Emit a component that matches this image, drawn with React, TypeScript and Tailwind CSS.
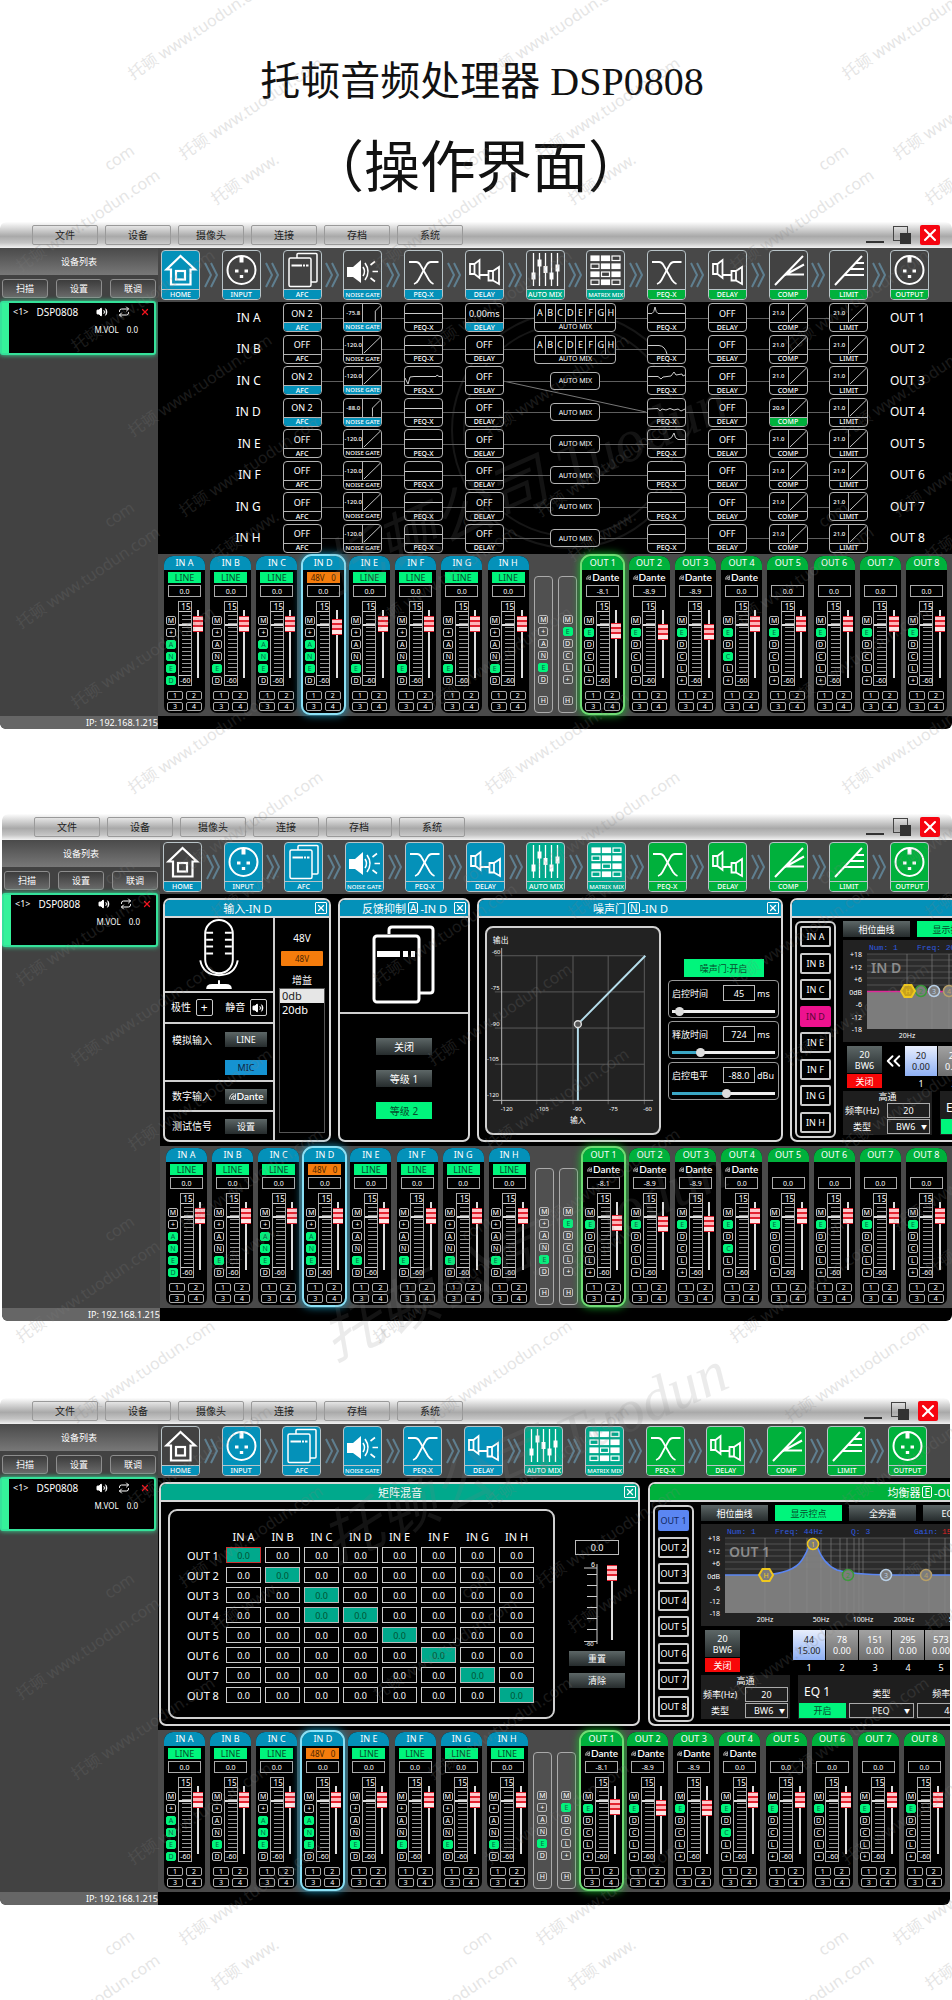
import { Fragment, type ReactNode } from 'react'
import clsx from 'clsx'
import { ChevronsLeft, Repeat, Volume2, X } from 'lucide-react'

type Tone = 'blue' | 'teal' | 'green'

const toneBg: Record<Tone, string> = {
    blue: 'bg-[#0491b9]',
    teal: 'bg-[#00a98c]',
    green: 'bg-[#00b13c]',
}

/* ---------- toolbar icons ---------- */

const HomeIcon = () => (
    <g strokeWidth="2.2">
        <path d="M18.500 5 4.500 18.500H9V33.500H28.500V18.500H33Z" />
        <rect x="14" y="20" width="9" height="8.500" />
    </g>
)

const XlrIcon = () => (
    <g>
        <circle cx="18.500" cy="19" r="14" strokeWidth="2" />
        <path d="M16.500 5h4v6.500h-4zM12 18.500h3.500v3H12zM21.500 18.500H25v3h-3.500zM16.800 24h3.400v3h-3.400z" fill="white" stroke="none" />
    </g>
)

const AfcIcon = () => (
    <g strokeWidth="1.500">
        <path d="M13 7V3.500Q13 2.500 14 2.500H32Q33 2.500 33 3.500V30Q33 31 32 31H27" />
        <rect x="5" y="7" width="22" height="28.500" rx="1.500" />
        <path d="M7.500 14.500H18M19 14.500H21M22 14.500H24.500" strokeWidth="2.200" />
    </g>
)

const GateIcon = () => (
    <g>
        <path d="M3 16H9L17 9V32L9 26H3Z" fill="white" stroke="none" />
        <path d="M19 16Q22 20.500 19 25M21 12Q27 20.500 21 29" strokeWidth="1.600" />
        <path d="M26.500 14 31 10.500M28.500 20.500H34M26.500 27 31 30.500" strokeWidth="1.600" />
    </g>
)

const PeqIcon = () => (
    <g strokeWidth="1.800">
        <path d="M4 11H11Q14 11 16 15L24 29Q26 32 28.500 33" />
        <path d="M33.500 11H26Q23 11 21 15L13.500 29Q12 32 9 33" />
    </g>
)

const DelayIcon = () => (
    <g strokeWidth="1.800">
        <path d="M4 13H8.500V23H4ZM8.500 13 13.500 9V27L8.500 23M13.500 24H22.500" />
        <path d="M22.500 20H27V29.500H22.500ZM27 20 33 16V33L27 29.500" />
    </g>
)

const AutoMixIcon = () => (
    <g strokeWidth="1.300">
        <path d="M6.500 2V35M12.500 2V35M18.500 2V35M24.500 2V35M30.500 2V35" />
        <path
            d="M4.500 21.500h4v7h-4zM10.500 8.500h4v7h-4zM16.500 15h4v7h-4zM22.500 21.500h4v7h-4zM28.500 13.500h4v7h-4z"
            fill="white"
            stroke="none"
        />
    </g>
)

const matrixDots = ['110', '011', '101', '010']

const MatrixIcon = () => (
    <g strokeWidth="1.200">
        {matrixDots.map((row, y) =>
            row.split('').map((on, x) => (
                <rect key={`${x}${y}`} x={4 + x * 10.500} y={5 + y * 8} width="8" height="4.500" fill={on === '1' ? 'white' : 'none'} />
            )),
        )}
    </g>
)

const CompIcon = () => (
    <g strokeWidth="2">
        <path d="M5 34 33 5M15 24 34 13.500M15 23.500H34" />
    </g>
)

const LimitIcon = () => (
    <g strokeWidth="2">
        <path d="M5 34 32 5M26 12H34M20.500 18H34M15 24H34" />
    </g>
)

const modules: { label: string; tone: Tone; icon: ReactNode }[] = [
    { label: 'HOME', tone: 'blue', icon: <HomeIcon /> },
    { label: 'INPUT', tone: 'blue', icon: <XlrIcon /> },
    { label: 'AFC', tone: 'blue', icon: <AfcIcon /> },
    { label: 'NOISE GATE', tone: 'blue', icon: <GateIcon /> },
    { label: 'PEQ-X', tone: 'blue', icon: <PeqIcon /> },
    { label: 'DELAY', tone: 'blue', icon: <DelayIcon /> },
    { label: 'AUTO MIX', tone: 'teal', icon: <AutoMixIcon /> },
    { label: 'MATRIX MIX', tone: 'teal', icon: <MatrixIcon /> },
    { label: 'PEQ-X', tone: 'green', icon: <PeqIcon /> },
    { label: 'DELAY', tone: 'green', icon: <DelayIcon /> },
    { label: 'COMP', tone: 'green', icon: <CompIcon /> },
    { label: 'LIMIT', tone: 'green', icon: <LimitIcon /> },
    { label: 'OUTPUT', tone: 'green', icon: <XlrIcon /> },
]

// long captions only fit the 37px tile one size down
const captionSize = (label: string) => (label.length > 8 ? 'text-[6px]' : 'text-[7px]')

function Toolbar({ home }: { home: boolean }) {
    return (
        <nav className="flex h-[54px] items-center bg-[#484848] pr-[23px] pl-[3px]">
            {modules.map((m, i) => {
                const filled = home ? i === 0 : i > 0
                return (
                    <Fragment key={i}>
                        {i > 0 && (
                            <span className="flex flex-1 justify-center">
                                <svg viewBox="0 0 16 28" className="h-7 w-4" fill="none" stroke="#5f7f90" strokeWidth="2">
                                    <path d="M2 2 8 14 2 26M8 2 14 14 8 26" />
                                </svg>
                            </span>
                        )}
                        <button
                            type="button"
                            className={clsx(
                                'flex h-[50px] w-[39px] shrink-0 flex-col overflow-hidden rounded-[4px] border border-[#b9c4c8]',
                                filled ? toneBg[m.tone] : 'bg-[#424242]',
                            )}
                        >
                            <svg viewBox="0 0 37 38" className="h-[38px] w-full" fill="none" stroke="white">
                                {m.icon}
                            </svg>
                            <span
                                className={clsx(
                                    'flex h-[10px] w-full items-center justify-center border-t border-[#b9c4c8] leading-[8px] font-medium whitespace-nowrap',
                                    captionSize(m.label),
                                    toneBg[m.tone],
                                )}
                            >
                                {m.label}
                            </span>
                        </button>
                    </Fragment>
                )
            })}
        </nav>
    )
}

/* ---------- title bar and device list ---------- */

const menus = ['文件', '设备', '摄像头', '连接', '存档', '系统']

function TitleBar() {
    return (
        <header className="flex h-[26px] items-center rounded-t-md bg-[linear-gradient(#fdfdfd,#a9a9a9_55%,#c4c4c4_80%,#f2f2f2)] pr-3 pl-8">
            <div className="flex gap-[7px]">
                {menus.map((menu) => (
                    <button key={menu} type="button" className="h-[20px] w-[66px] rounded-[2px] border border-[#9a9a9a] text-[10px] leading-none text-[#222]">
                        {menu}
                    </button>
                ))}
            </div>
            <div className="ml-auto flex items-center gap-[9px]">
                <button type="button" aria-label="最小化" className="flex h-5 w-[18px] items-end">
                    <span className="mb-[2px] h-[2px] w-full bg-[#333]" />
                </button>
                <button type="button" aria-label="还原">
                    <svg viewBox="0 0 18 18" className="h-[18px] w-[18px]">
                        <rect x="0.500" y="0.500" width="14" height="14" fill="none" stroke="#444" />
                        <rect x="7" y="7" width="11" height="11" fill="#333" />
                    </svg>
                </button>
                <button type="button" aria-label="关闭窗口" className="flex h-5 w-5 items-center justify-center rounded-[2px] bg-[#f60410]">
                    <X className="h-5 w-5 text-white" strokeWidth={2.5} />
                </button>
            </div>
        </header>
    )
}

function Sidebar() {
    return (
        <aside className="flex w-[158px] shrink-0 flex-col bg-[#424242]">
            <h2 className="flex h-[27px] items-center justify-center bg-linear-to-b from-[#4a4a4a] to-[#787878] text-[9px] leading-none">设备列表</h2>
            <div className="flex h-[26px] items-center justify-between px-[2px]">
                {['扫描', '设置', '联调'].map((label) => (
                    <button
                        key={label}
                        type="button"
                        className="h-[19px] w-[46px] rounded-[3px] border border-[#8d8d8d] bg-linear-to-b from-[#3c3c3c] to-[#6a6a6a] text-[9px] leading-none"
                    >
                        {label}
                    </button>
                ))}
            </div>
            <section className="mr-[2px] flex h-[54px] rounded-[3px] border-2 border-[#35e29a] bg-black shadow-[0_0_5px_#35e29a]">
                <div className="w-[7px] bg-[#35f29a]" />
                <div className="flex-1 pt-[3px]">
                    <div className="flex items-center pr-1 pl-1">
                        <span className="text-[9px] leading-3">&lt;1&gt;</span>
                        <span className="ml-2 text-[10px] leading-3">DSP0808</span>
                        <Volume2 className="ml-auto h-3 w-3" fill="white" />
                        <Repeat className="ml-[10px] h-3 w-3" />
                        <X className="ml-[10px] h-[10px] w-[10px] text-[#f0141e]" strokeWidth={3} />
                    </div>
                    <p className="mt-[6px] flex justify-end gap-2 pr-[16px] text-[8px] leading-3">
                        <span>M.VOL</span>
                        <span>0.0</span>
                    </p>
                </div>
            </section>
            <p className="mt-auto h-[13px] rounded-bl-md bg-[#666] text-right text-[9px] leading-[13px]">IP: 192.168.1.215</p>
        </aside>
    )
}

/* ---------- mixer ---------- */

function Dante() {
    return (
        <span className="flex items-center justify-center gap-px font-['Lato',sans-serif] text-[10px] leading-[11px] font-semibold text-white">
            <svg viewBox="0 0 12 12" className="h-[7px] w-[7px]" fill="none" stroke="white" strokeWidth="1.500">
                <path d="M1 11Q1 3 8 1M4 11Q4 6 9 4M11 1V11H7V8Q7 6 11 5" />
            </svg>
            Dante
        </span>
    )
}

const verticalFader =
    'block w-[10px] appearance-none bg-[linear-gradient(90deg,transparent_4px,#ddd_4px,#ddd_6px,transparent_6px)] [direction:rtl] [writing-mode:vertical-lr] [&::-webkit-slider-thumb]:h-[16px] [&::-webkit-slider-thumb]:w-[10px] [&::-webkit-slider-thumb]:appearance-none [&::-webkit-slider-thumb]:bg-[linear-gradient(#e2222f_1px,#ffc9cc_1px,#ffc9cc_4px,#e2222f_4px,#e2222f_6px,#ffb4b8_6px,#ffb4b8_9px,#e2222f_9px,#e2222f_11px,#ffe4e4_11px,#ffe4e4_15px,#e2222f_15px)]'

const KEY_OFF = 'border-[#bbb] text-white'
const KEY_ON = 'border-[#00f57c] bg-[#00f57c] text-[#064]'

function Keys({ keys, on }: { keys: string; on: string }) {
    return (
        <div className="flex flex-col gap-[3px]">
            {keys.split('').map((key) => (
                <button
                    key={key}
                    type="button"
                    className={clsx('flex h-[9px] w-[10px] items-center justify-center rounded-[2px] border text-[7px] leading-none', on.includes(key) ? KEY_ON : KEY_OFF)}
                >
                    {key}
                </button>
            ))}
        </div>
    )
}

type StripProps = {
    name: string
    keys: string
    on: string
    output?: boolean
    selected?: boolean
    source?: 'LINE' | '48V' | 'Dante'
    gain?: string
    level?: number
}

function Strip({ name, keys, on, output, selected, source, gain = '0.0', level = 88 }: StripProps) {
    return (
        <section
            className={clsx(
                'flex h-[157px] w-[41px] shrink-0 flex-col items-center rounded-t-[9px] rounded-b-[7px] bg-black',
                selected && output && 'shadow-[0_0_8px_2px_#18b82c] outline-2 outline-[#6fdc74]',
                selected && !output && 'shadow-[0_0_8px_2px_#1b96bd] outline-2 outline-[#8be0f5]',
            )}
        >
            <h3 className={clsx('h-[14px] w-full rounded-t-[9px] text-center text-[9px] leading-[14px]', output ? toneBg.green : toneBg.blue)}>{name}</h3>
            <div className="mt-[2px] h-[11px] w-[33px]">
                {source === 'LINE' && <button type="button" className="block h-[11px] w-full bg-[#00f57c] text-[9px] leading-[11px] text-[#064d2c]">LINE</button>}
                {source === '48V' && (
                    <button type="button" className="flex h-[11px] w-full items-center justify-between bg-[#f57c0c] px-[4px] text-[8px] leading-none text-[#4a2400]">
                        <span>48V</span>
                        <span>0</span>
                    </button>
                )}
                {source === 'Dante' && <Dante />}
            </div>
            <output className="mt-[2px] flex h-[12px] w-[33px] items-center justify-center border border-[#aaa] text-[7px] leading-none">{gain}</output>
            <div className="mt-[4px] flex h-[85px] w-[37px] justify-between">
                <div className="pt-[15px]">
                    <Keys keys={keys} on={on} />
                </div>
                <div className="flex w-[14px] flex-col border border-[#aaa] text-[8px]">
                    <span className="h-[9px] text-right leading-[9px]">15</span>
                    <span className="relative flex-1 border-y border-[#ccc] bg-[repeating-linear-gradient(transparent_0_3px,#999_3px_4px)] bg-[length:9px_100%] bg-right bg-no-repeat">
                        <span className="absolute inset-x-0 top-[12px] h-[2px] bg-[#ddd]" />
                    </span>
                    <span className="h-[9px] text-right text-[7px] leading-[9px]">-60</span>
                </div>
                <div className="pt-[9px]">
                    <input type="range" aria-label={`${name} 音量`} min={0} max={100} defaultValue={level} className={clsx(verticalFader, 'h-[68px]')} />
                </div>
            </div>
            <div className="mt-[5px] grid grid-cols-2 gap-x-[3px] gap-y-[2px]">
                {[1, 2, 3, 4].map((n) => (
                    <button key={n} type="button" className="flex h-[9px] w-[16px] items-center justify-center rounded-[2px] border border-[#aaa] text-[7px] leading-none">
                        {n}
                    </button>
                ))}
            </div>
        </section>
    )
}

function MasterKeys({ keys, on }: { keys: string; on: string }) {
    return (
        <div className="flex h-[137px] w-[19px] shrink-0 flex-col items-center justify-end rounded-[4px] border border-[#aaa] bg-[#505050] pb-[7px]">
            <Keys keys={keys} on={on} />
            <div className="mt-[12px]">
                <Keys keys="H" on="" />
            </div>
        </div>
    )
}

const inputs = [
    { name: 'IN A', on: 'ANED' },
    { name: 'IN B', on: 'E' },
    { name: 'IN C', on: 'ANE' },
    { name: 'IN D', on: 'ANE' },
    { name: 'IN E', on: 'E' },
    { name: 'IN F', on: 'E' },
    { name: 'IN G', on: 'E' },
    { name: 'IN H', on: 'E' },
]

const outputs = [
    { name: 'OUT 1', on: 'E', gain: '-8.1', level: 75, dante: true },
    { name: 'OUT 2', on: 'E', gain: '-8.9', level: 73, dante: true },
    { name: 'OUT 3', on: 'E', gain: '-8.9', level: 73, dante: true },
    { name: 'OUT 4', on: 'EC', gain: '0.0', level: 88, dante: true },
    { name: 'OUT 5', on: 'E', gain: '0.0', level: 88 },
    { name: 'OUT 6', on: 'E', gain: '0.0', level: 88 },
    { name: 'OUT 7', on: 'E', gain: '0.0', level: 88 },
    { name: 'OUT 8', on: 'E', gain: '0.0', level: 88 },
]

function Mixer({ levelD = 88 }: { levelD?: number }) {
    return (
        <section className="flex h-[162px] items-end justify-between bg-[#4a4a4a] pr-[5px] pb-[3px] pl-[6px]">
            {inputs.map(({ name, on }) => (
                <Strip
                    key={name}
                    name={name}
                    on={on}
                    keys="M+ANED"
                    source={name === 'IN D' ? '48V' : 'LINE'}
                    selected={name === 'IN D'}
                    level={name === 'IN D' ? levelD : 88}
                />
            ))}
            <MasterKeys keys="M+ANED" on="E" />
            <MasterKeys keys="MEDCL+" on="E" />
            {outputs.map(({ name, on, gain, level, dante }) => (
                <Strip key={name} name={name} on={on} keys="MEDCL+" output source={dante ? 'Dante' : undefined} selected={name === 'OUT 1'} gain={gain} level={level} />
            ))}
        </section>
    )
}

function Workstation({ home = false, levelD, className, children }: { home?: boolean; levelD?: number; className?: string; children: ReactNode }) {
    return (
        <article className={clsx('overflow-hidden rounded-md text-white', className)}>
            <TitleBar />
            <div className="flex">
                <Sidebar />
                <div className="min-w-0 flex-1 bg-black">
                    <Toolbar home={home} />
                    <div className="flex h-[252px] overflow-hidden">{children}</div>
                    <Mixer levelD={levelD} />
                    <div className="h-[13px]" />
                </div>
            </div>
        </article>
    )
}

/* ---------- signal flow ---------- */

function Block({ label, active, children }: { label: string; active?: string; children: ReactNode }) {
    return (
        <button type="button" className="relative flex h-[29px] flex-col overflow-hidden rounded-[4px] border border-[#b4b4b4] bg-black">
            <span className="flex h-[18px] w-full items-center justify-center text-[9px] leading-none">{children}</span>
            <span
                className={clsx(
                    'flex h-[9px] w-full items-center justify-center border-t border-[#b4b4b4] leading-none font-medium whitespace-nowrap',
                    captionSize(label),
                    active,
                )}
            >
                {label}
            </span>
        </button>
    )
}

function Curve({ d }: { d: string }) {
    return (
        <svg viewBox="0 0 37 18" className="h-full w-full" fill="none" stroke="#ccc">
            <path d={d} />
        </svg>
    )
}

function Dynamics({ value, d = 'M1 17.500 18 1' }: { value: string; d?: string }) {
    return (
        <>
            <span className="w-[18px] text-center text-[6px] font-medium">{value}</span>
            <svg viewBox="0 0 19 18" className="h-full w-[19px] border-l border-[#b4b4b4]" fill="none" stroke="#ccc">
                <path d={d} />
            </svg>
        </>
    )
}

const FLAT = 'M0 9.500H37'

const flows = [
    { ch: 'A', n: 1, afc: 'ON 2', gate: '-75.8', gateOn: true, knee: 'M13 18V7L19 1', delay: '0.00ms', auto: true, outPeq: 'M0 9.500H4Q6 9 7 3Q8 9 10 9.500H37' },
    { ch: 'B', n: 2, afc: 'OFF', gate: '-120.0', delay: 'OFF', auto: true, outPeq: 'M0 9.500H11Q17 10 19 18' },
    { ch: 'C', n: 3, afc: 'ON 2', gate: '-120.0', gateOn: true, delay: 'OFF', inPeq: 'M0 11 3 17 5 10 9 9.500H31L32 8 34 9.500H37', outPeq: 'M0 9.500H10L13 12 15 10 23 9 26 5 28 8 34 7 35 9 37 8' },
    { ch: 'D', n: 4, afc: 'ON 2', gate: '-88.0', gateOn: true, knee: 'M10 18V9L18 1', delay: 'OFF', comp: '20.9', outPeq: 'M0 10 10 9.500 12 12 14 10 18 11 22 9.500 26 11 30 10 33 12 37 10' },
    { ch: 'E', n: 5, afc: 'OFF', gate: '-120.0', delay: 'OFF', outPeq: 'M0 9.500H20Q24 9 26 3Q27 9 30 9.500H37' },
    { ch: 'F', n: 6, afc: 'OFF', gate: '-120.0', delay: 'OFF' },
    { ch: 'G', n: 7, afc: 'OFF', gate: '-120.0', delay: 'OFF' },
    { ch: 'H', n: 8, afc: 'OFF', gate: '-120.0', delay: 'OFF' },
]

function SignalFlow() {
    return (
        <div className="relative flex flex-1 flex-col">
            <svg viewBox="0 0 794 252" className="absolute inset-0 h-full w-full" fill="none" stroke="#161616" strokeWidth="2">
                <circle cx="412" cy="128" r="118" />
                <circle cx="412" cy="128" r="106" />
                <path d="M345 79 488 110" stroke="#777" strokeWidth="1" />
            </svg>
            {flows.map((f) => (
                <div key={f.ch} className="relative grid flex-1 grid-cols-[repeat(13,39px)] items-center justify-between pr-[23px] pl-[3px]">
                    <span className="absolute top-1/2 right-[84px] left-[125px] h-px bg-[#5e5e5e]" />
                    <span className="col-span-2 text-right text-[12px] leading-none">IN {f.ch}</span>
                    <Block label="AFC" active={f.afc === 'OFF' ? '' : toneBg.blue}>{f.afc}</Block>
                    <Block label="NOISE GATE" active={f.gateOn ? toneBg.blue : ''}>
                        <Dynamics value={f.gate} d={f.knee} />
                    </Block>
                    <Block label="PEQ-X">
                        <Curve d={f.inPeq ?? FLAT} />
                    </Block>
                    <Block label="DELAY" active={f.delay === 'OFF' ? '' : toneBg.blue}>{f.delay}</Block>
                    <div className="relative col-span-2 flex justify-center">
                        {f.auto ? (
                            <div className="w-[82px] overflow-hidden rounded-[4px] border border-[#b4b4b4] bg-black">
                                <div className="flex h-[18px] divide-x divide-[#b4b4b4] text-[9px] leading-[18px]">
                                    {'ABCDEFGH'.split('').map((c) => (
                                        <button key={c} type="button" className="flex-1">{c}</button>
                                    ))}
                                </div>
                                <p className="h-[9px] border-t border-[#b4b4b4] text-center text-[7px] leading-[8px]">AUTO MIX</p>
                            </div>
                        ) : (
                            <button type="button" className="h-[18px] w-[50px] rounded-[4px] border border-[#b4b4b4] bg-black text-[7px] leading-none">AUTO MIX</button>
                        )}
                    </div>
                    <Block label="PEQ-X">
                        <Curve d={f.outPeq ?? FLAT} />
                    </Block>
                    <Block label="DELAY">OFF</Block>
                    <Block label="COMP" active={f.comp ? toneBg.green : ''}>
                        <Dynamics value={f.comp ?? '21.0'} />
                    </Block>
                    <Block label="LIMIT">
                        <Dynamics value="21.0" />
                    </Block>
                    <span className="text-[12px] leading-none whitespace-nowrap">OUT {f.n}</span>
                </div>
            ))}
        </div>
    )
}

/* ---------- module windows ---------- */

function Win({ title, tone, className, children }: { title: ReactNode; tone: Tone; className: string; children: ReactNode }) {
    return (
        <section className={clsx('flex h-[244px] shrink-0 flex-col overflow-hidden rounded-[7px] border-2 border-[#d8d8d8] bg-black', className)}>
            <header className={clsx('flex h-[18px] shrink-0 items-center border-b-2 border-[#d8d8d8] pr-[2px] pl-[15px]', toneBg[tone])}>
                <h3 className="flex flex-1 items-center justify-center text-[11px] leading-none whitespace-nowrap">{title}</h3>
                <button type="button" aria-label="关闭" className="flex h-3 w-3 items-center justify-center rounded-[1px] border border-white">
                    <X className="h-[10px] w-[10px]" strokeWidth={3} />
                </button>
            </header>
            {children}
        </section>
    )
}

function Tag({ children }: { children: ReactNode }) {
    return <span className="mx-[2px] rounded-[2px] border border-white px-px text-[10px] leading-[10px]">{children}</span>
}

const METAL = 'bg-linear-to-b from-[#5d6767] to-[#262c2d] text-white'
const LIT = 'bg-[#00f57c] text-[#064d2c]'

function InputWindow() {
    return (
        <Win title="输入-IN D" tone="blue" className="w-[168px]">
            <div className="flex flex-1">
                <div className="flex w-[110px] flex-col divide-y-2 divide-[#cfcfcf] border-r-2 border-[#cfcfcf] text-[10px]">
                    <div className="flex h-[75px] justify-center">
                        <svg viewBox="0 0 42 74" className="h-[73px] w-[42px]" fill="none" stroke="white" strokeWidth="2">
                            <rect x="7" y="2" width="28" height="54" rx="14" />
                            <path d="M8 15H15M8 22H15M8 29H15M8 36H15M27 15H34M27 22H34M27 29H34M27 36H34" />
                            <path d="M2 43Q5 58 21 58T40 43" />
                            <path d="M21 63V67" />
                            <path d="M8 72Q8 67 14 67H28Q34 67 34 72Z" fill="white" stroke="none" />
                        </svg>
                    </div>
                    <div className="flex h-[31px] items-center justify-between px-[6px]">
                        <span>极性</span>
                        <button type="button" className="h-[17px] w-[17px] rounded-[2px] border border-[#ccc] text-[12px] leading-none">+</button>
                        <span className="ml-2">静音</span>
                        <button type="button" aria-label="静音" className="flex h-[17px] w-[17px] items-center justify-center rounded-[2px] border border-[#ccc]">
                            <Volume2 className="h-3 w-3" fill="white" />
                        </button>
                    </div>
                    <div className="flex h-[58px] justify-between pt-[8px] pr-[6px] pl-[7px]">
                        <span className="leading-4">模拟输入</span>
                        <div className="flex flex-col gap-[13px]">
                            <button type="button" className={clsx('h-[15px] w-[42px] text-[9px] leading-none', METAL)}>LINE</button>
                            <button type="button" className="h-[15px] w-[42px] bg-[#1593d2] text-[9px] leading-none text-[#0a2440]">MIC</button>
                        </div>
                    </div>
                    <div className="flex h-[30px] items-center justify-between pr-[6px] pl-[7px]">
                        <span>数字输入</span>
                        <button type="button" className={clsx('h-[15px] w-[42px]', METAL)}><Dante /></button>
                    </div>
                    <div className="flex flex-1 items-center justify-between pr-[6px] pl-[7px]">
                        <span>测试信号</span>
                        <button type="button" className={clsx('h-[15px] w-[42px] text-[9px] leading-none', METAL)}>设置</button>
                    </div>
                </div>
                <div className="flex flex-1 flex-col items-center pt-[13px] text-[10px] leading-[14px]">
                    <span>48V</span>
                    <button type="button" className="mt-[6px] h-[15px] w-[42px] rounded-[1px] bg-[#f57c0c] text-[8px] leading-none text-[#4a2400]">48V</button>
                    <span className="mt-[7px]">增益</span>
                    <div role="listbox" aria-label="增益" className="mt-px flex h-[145px] w-[46px] flex-col border border-[#555]">
                        <button type="button" role="option" aria-selected="true" className="bg-[#e6e6e6] pl-[2px] text-left text-[11px] text-[#222]">0db</button>
                        <button type="button" role="option" aria-selected="false" className="pl-[2px] text-left text-[11px]">20db</button>
                    </div>
                </div>
            </div>
        </Win>
    )
}

function FeedbackWindow() {
    return (
        <Win title={<>反馈抑制<Tag>A</Tag>-IN D</>} tone="blue" className="w-[132px]">
            <div className="flex h-[96px] items-center justify-center border-b-2 border-[#cfcfcf]">
                <svg viewBox="0 0 64 80" className="h-[80px] w-[64px]" fill="none" stroke="white" strokeWidth="3">
                    <path d="M17 9V5Q17 2 20 2H58Q61 2 61 5V65Q61 68 58 68H47" />
                    <rect x="2" y="11" width="45" height="66" rx="3" />
                    <path d="M5 29H28M31 29H36M39 29H43" strokeWidth="6" />
                </svg>
            </div>
            <div className="flex flex-1 flex-col items-center gap-[15px] pt-[24px] text-[10px] leading-none">
                <button type="button" className={clsx('h-[17px] w-[56px]', METAL)}>关闭</button>
                <button type="button" className={clsx('h-[17px] w-[56px]', METAL)}>等级 1</button>
                <button type="button" className={clsx('h-[17px] w-[56px]', LIT)}>等级 2</button>
            </div>
        </Win>
    )
}

const gateParams = [
    { label: '启控时间', value: '45', unit: 'ms', pos: 3, fill: 'bg-[linear-gradient(90deg,#eee_0%,#eee_100%)]' },
    { label: '释放时间', value: '724', unit: 'ms', pos: 25, fill: 'bg-[linear-gradient(90deg,#3aa6c4_27%,#eee_27%)]' },
    { label: '启控电平', value: '-88.0', unit: 'dBu', pos: 53, fill: 'bg-[linear-gradient(90deg,#3aa6c4_53%,#eee_53%)]' },
]

function GateWindow() {
    return (
        <Win title={<>噪声门<Tag>N</Tag>-IN D</>} tone="blue" className="w-[306px]">
            <div className="flex flex-1 pt-[8px] pl-[6px]">
                <svg viewBox="0 0 176 209" className="h-[209px] w-[176px] shrink-0 rounded-[8px] border-2 border-[#d0d0d0] bg-[#222]" fill="none">
                    <path d="M51 28V180M88 28V180M124 28V180M161 28V180M8 28H161M8 65H161M8 102H161M8 139H161" stroke="#5c5c5c" />
                    <path d="M15 20V180M6 176H170" stroke="#b5b5b5" />
                    <path d="M93 176V98L162 28" stroke="#b4dcea" strokeWidth="2" />
                    <circle cx="93" cy="98" r="3.500" fill="#555" stroke="#ddd" strokeWidth="1.500" />
                    <g fill="white" fontSize="6">
                        <text x="5" y="26">-60</text>
                        <text x="4" y="63">-75</text>
                        <text x="4" y="100">-90</text>
                        <text x="0" y="136">-105</text>
                        <text x="0" y="173">-120</text>
                        <text x="14" y="187">-120</text>
                        <text x="51" y="187">-105</text>
                        <text x="88" y="187">-90</text>
                        <text x="125" y="187">-75</text>
                        <text x="160" y="187">-60</text>
                        <text x="6" y="15" fontSize="8">输出</text>
                        <text x="85" y="199" fontSize="8">输入</text>
                    </g>
                </svg>
                <div className="flex flex-1 flex-col items-center gap-[3px] pr-[2px] pl-[7px] pt-[33px]">
                    <button type="button" className={clsx('h-[18px] w-[80px] text-[9px] leading-none', LIT)}>噪声门:开启</button>
                    {gateParams.map((p) => (
                        <label key={p.label} className="flex h-[38px] w-full flex-col justify-between rounded-[4px] border border-[#999] px-[3px] pt-[4px] pb-[2px] text-[9px]">
                            <span className="flex items-center leading-none">
                                {p.label}
                                <output className="ml-auto flex h-[16px] w-[32px] items-center justify-center border border-[#bbb]">{p.value}</output>
                                <span className="w-[20px] pl-[2px]">{p.unit}</span>
                            </span>
                            <input
                                type="range"
                                defaultValue={p.pos}
                                className={clsx(
                                    'h-[8px] w-full appearance-none bg-[length:100%_3px] bg-center bg-no-repeat [&::-webkit-slider-thumb]:h-[9px] [&::-webkit-slider-thumb]:w-[9px] [&::-webkit-slider-thumb]:appearance-none [&::-webkit-slider-thumb]:rounded-full [&::-webkit-slider-thumb]:bg-[#ddd]',
                                    p.fill,
                                )}
                            />
                        </label>
                    ))}
                </div>
            </div>
        </Win>
    )
}

type Point = { x: number; y: number; label: string; color: string }

type EqProps = {
    title: ReactNode
    tone: Tone
    channels: string[]
    current: string
    currentClass: string
    lineColor: string
    curve: string
    freq: string
    points: Point[]
    bands: string[][]
    paged?: boolean
}

const freqMarks = [
    { x: 64, label: '20Hz' },
    { x: 120, label: '50Hz' },
    { x: 162, label: '100Hz' },
    { x: 203, label: '200Hz' },
    { x: 258, label: '500Hz' },
]

const gridX = [64, 89, 106, 120, 130, 139, 146, 153, 158, 162, 203, 228, 244, 258, 268]
const dbMarks = ['+18', '+12', '+6', '0dB', '-6', '-12', '-18']

function EqWindow({ title, tone, channels, current, currentClass, lineColor, curve, freq, points, bands, paged }: EqProps) {
    return (
        <Win title={title} tone={tone} className="w-[560px]">
            <div className="flex flex-1 gap-[7px] pt-[3px] pl-[3px]">
                <div className="flex h-[217px] w-[41px] shrink-0 flex-col items-center justify-between rounded-[6px] border-2 border-[#d0d0d0] py-[3px]">
                    {channels.map((c) => (
                        <button
                            key={c}
                            type="button"
                            className={clsx('h-[21px] w-[31px] rounded-[2px] border-2 text-[9px] leading-none whitespace-nowrap', c === current ? currentClass : 'border-[#ccc]')}
                        >
                            {c}
                        </button>
                    ))}
                </div>
                <div className="flex flex-1 flex-col">
                    <div className="flex gap-[7px] text-[9px] leading-none">
                        {['相位曲线', '显示控点', '全旁通', 'EQ复位'].map((label, i) => (
                            <button key={label} type="button" className={clsx('h-[16px] w-[67px]', i === 1 ? LIT : METAL)}>{label}</button>
                        ))}
                    </div>
                    <svg viewBox="0 0 500 102" className="mt-[3px] h-[102px] w-[500px] bg-[#222]" fill="none">
                        <rect x="24" y="14" width="476" height="75" fill="#2c2c2c" />
                        <path d={`${curve}V89H24Z`} fill="#7c7c7c" />
                        {gridX.map((x) => (
                            <path key={x} d={`M${x} 14V89`} stroke="#8a8a8a" strokeOpacity="0.6" />
                        ))}
                        {[14, 20, 26, 32, 38, 45].map((y) => (
                            <path key={y} d={`M24 ${y}H500`} stroke="#777" strokeOpacity="0.5" />
                        ))}
                        <path d={curve} stroke={lineColor} strokeWidth="1.500" />
                        <g fontFamily="Liberation Mono" fontSize="8" fill="#2f5be0">
                            <text x="26" y="10">Num: 1</text>
                            <text x="74" y="10">Freq: {freq}</text>
                            <text x="150" y="10">Q: 3</text>
                            <text x="213" y="10">Gain:</text>
                            <text x="241" y="10" fill="#d22">15dB</text>
                        </g>
                        <text x="28" y="33" fontSize="14" fontWeight="600" fill="#8c8c8c">{current}</text>
                        <g fill="white" fontSize="7">
                            {dbMarks.map((mark, i) => (
                                <text key={mark} x="19" y={17 + i * 12.500} textAnchor="end">{mark}</text>
                            ))}
                            {freqMarks.map(({ x, label }) => (
                                <text key={label} x={x} y="98" textAnchor="middle">{label}</text>
                            ))}
                        </g>
                        {points.map((p) => (
                            <g key={p.label} stroke={p.color}>
                                {p.label === 'H' ? (
                                    <path d={`M${p.x - 7} ${p.y}l3.500-6h7l3.500 6-3.500 6h-7z`} strokeWidth="2" fill={paged ? '#c9a21a' : '#7c7c7c'} />
                                ) : (
                                    <circle cx={p.x} cy={p.y} r="5.500" strokeWidth="1.500" fill="#7c7c7c" />
                                )}
                                <text x={p.x} y={p.y + 2.500} textAnchor="middle" fontSize="7" stroke="none" fill={p.color}>{p.label}</text>
                            </g>
                        ))}
                    </svg>
                    <div className="mt-[4px] flex pl-[4px] text-[9px] leading-[11px]">
                        <div className="w-[35px]">
                            <button type="button" className={clsx('block h-[27px] w-full', METAL)}>20<br />BW6</button>
                            <button type="button" className="mt-px block h-[14px] w-full bg-[#f80808]">关闭</button>
                        </div>
                        <div className={clsx('flex h-[30px] items-center justify-center', paged ? 'w-[23px]' : 'w-[53px]')}>
                            {paged && <ChevronsLeft className="h-6 w-6" />}
                        </div>
                        <div className="flex gap-px">
                            {bands.map(([f, g], i) => (
                                <div key={i} className="w-[32px] text-center">
                                    <button
                                        type="button"
                                        className={clsx('block h-[30px] w-full', i === 0 ? 'bg-linear-to-b from-[#e8eefc] to-[#8fb0f4] text-[#222]' : 'bg-linear-to-b from-[#a2a2a2] to-[#6e6e6e]')}
                                    >
                                        {f}<br />{g}
                                    </button>
                                    <span className="mt-[2px] block">{i + 1}</span>
                                </div>
                            ))}
                        </div>
                    </div>
                    <div className="mt-[2px] flex gap-[8px] text-[9px] leading-none">
                        <div className="flex h-[44px] w-[89px] flex-col justify-between bg-[#1e1e1e] px-[2px] py-px">
                            <span className="h-[10px] text-center">高通</span>
                            <label className="flex items-center justify-between">
                                频率(Hz)
                                <input type="text" defaultValue="20" className="h-[15px] w-[43px] border border-[#aaa] text-center" />
                            </label>
                            <label className="flex items-center justify-between pl-[8px]">
                                类型
                                <span className="flex h-[15px] w-[43px] items-center border border-[#aaa] pr-[2px]">
                                    <select className="h-full w-full appearance-none bg-[#1e1e1e] pl-[8px]">
                                        <option>BW6</option>
                                    </select>
                                    <span className="text-[6px]">▼</span>
                                </span>
                            </label>
                        </div>
                        <div className="grid h-[44px] flex-1 grid-cols-[47px_65px_65px] content-end gap-x-[3px] gap-y-[5px] bg-[#1e1e1e] pb-px pl-px">
                            <span className="pl-[5px] text-[12px]">EQ 1</span>
                            <span className="self-end text-center">类型</span>
                            <span className="self-end text-center">频率(Hz)</span>
                            <button type="button" className={clsx('h-[15px]', LIT)}>开启</button>
                            <span className="flex h-[15px] items-center border border-[#aaa] pr-[3px]">
                                <select aria-label="类型" className="h-full w-full appearance-none bg-[#1e1e1e] pl-[22px]">
                                    <option>PEQ</option>
                                </select>
                                <span className="text-[6px]">▼</span>
                            </span>
                            <input type="text" aria-label="频率(Hz)" defaultValue="44" className="h-[15px] w-full border border-[#aaa] text-center" />
                        </div>
                    </div>
                </div>
            </div>
        </Win>
    )
}

/* ---------- matrix ---------- */

const letters = 'ABCDEFGH'.split('')
const routed = ['A', 'B', 'C', 'CD', 'E', 'F', 'G', 'H']

function MatrixWindow() {
    return (
        <Win title="矩阵混音" tone="teal" className="w-[481px]">
            <div className="flex flex-1">
                <div className="mt-[7px] ml-[7px] h-[210px] w-[387px] rounded-[9px] border-2 border-[#d0d0d0] pt-[15px] pl-[13px]">
                    <table className="border-separate border-spacing-x-[4px] border-spacing-y-[4px] text-[11px] leading-none">
                        <thead>
                            <tr>
                                <td />
                                {letters.map((l) => (
                                    <th key={l} scope="col" className="h-[13px] p-0 font-normal whitespace-nowrap">IN {l}</th>
                                ))}
                            </tr>
                        </thead>
                        <tbody>
                            {routed.map((on, i) => (
                                <tr key={i}>
                                    <th scope="row" className="w-[35px] p-0 text-left text-[11px] font-normal whitespace-nowrap">OUT {i + 1}</th>
                                    {letters.map((l) => (
                                        <td key={l} className="p-0">
                                            <button
                                                type="button"
                                                className={clsx(
                                                    'block h-[16px] w-[35px] border text-[9px] leading-none',
                                                    on.includes(l) ? 'bg-[#00a98c] text-[#053]' : 'border-[#ccc]',
                                                    on.includes(l) && (i === 0 ? 'border-[#c33]' : 'border-[#bbb]'),
                                                )}
                                            >
                                                0.0
                                            </button>
                                        </td>
                                    ))}
                                </tr>
                            ))}
                        </tbody>
                    </table>
                </div>
                <div className="flex flex-1 flex-col items-center pt-[38px] pl-px text-[9px] leading-none">
                    <output className="flex h-[15px] w-[44px] items-center justify-center border border-[#bbb]">0.0</output>
                    <div className="mt-[7px] flex h-[84px] gap-[8px] pl-[3px]">
                        <svg viewBox="0 0 18 84" className="h-[84px] w-[18px]" stroke="#ccc">
                            <path d="M16 2V82M3 6H16M6 12.500H16M6 23.500H16M6 34.500H16M6 45.500H16M6 56.500H16M6 67.500H16M3 79.500H16" />
                            <text x="10" y="5" fontSize="7" fill="white" stroke="none">6</text>
                            <text x="4" y="84" fontSize="6" fill="white" stroke="none">-60</text>
                        </svg>
                        <input type="range" aria-label="矩阵电平" defaultValue={100} className={clsx(verticalFader, 'mt-[3px] h-[75px]')} />
                    </div>
                    <button type="button" className={clsx('mt-[5px] h-[15px] w-[56px]', METAL)}>重置</button>
                    <button type="button" className={clsx('mt-[7px] h-[15px] w-[56px]', METAL)}>清除</button>
                </div>
            </div>
        </Win>
    )
}

/* ---------- watermark ---------- */

const marks = [
    { x: 22, y: 274, text: '托顿 www.tuodun.com' },
    { x: 77, y: 354, text: '托顿 www.tuodun.com' },
    { x: 134, y: 82, text: '托顿 www.tuodun.com' },
    { x: 185, y: 162, text: '托顿 www.tuodun.com' },
    { x: 217, y: 207, text: '托顿 www.' },
    { x: 110, y: 173, text: 'com' },
]

const bigMarks = [600, 1367, 1570]

function Watermark() {
    return (
        <div aria-hidden="true" className="pointer-events-none absolute inset-0 overflow-hidden text-[#808080] select-none">
            {Array.from({ length: 24 }, (_, i) => {
                const left = ((i % 4) - 1) * 357
                const top = Math.floor(i / 4) * 357
                return marks.map((m) => (
                    <span
                        key={`${i}-${m.x}`}
                        className="absolute origin-bottom-left -rotate-[34deg] text-[16px] leading-4 whitespace-nowrap opacity-20"
                        style={{ left: left + m.x, top: top + m.y - 16 }}
                    >
                        {m.text}
                    </span>
                ))
            })}
            {bigMarks.map((y) => (
                <span
                    key={y}
                    className="absolute left-[338px] origin-bottom-left -rotate-[24deg] text-[60px] leading-[60px] whitespace-nowrap italic opacity-15"
                    style={{ top: y - 60 }}
                >
                    托顿公司 <span className="font-['Liberation_Serif']">Tuodun</span>
                </span>
            ))}
        </div>
    )
}

export default function App() {
    return (
        <main className="relative overflow-hidden bg-white pb-[95px] font-['Noto_Sans','Noto_Sans_CJK_SC',sans-serif]">
            <header className="pt-[58px] pb-[22px] text-center font-['Liberation_Serif','Noto_Sans_CJK_SC',serif] text-[#111]">
                <h1 className="pl-[12px] text-[40px] leading-[48px]">托顿音频处理器 DSP0808</h1>
                <p className="mt-[30px] text-[56px] leading-[64px]">（操作界面）</p>
            </header>

            <Workstation home levelD={83}>
                <SignalFlow />
            </Workstation>

            <Workstation className="mt-[85px] ml-[2px]">
                <div className="flex gap-[7px] pt-[4px] pl-[3px]">
                    <InputWindow />
                    <FeedbackWindow />
                    <GateWindow />
                    <EqWindow
                        title={<>均衡器<Tag>E</Tag>-IN D</>}
                        tone="blue"
                        channels={letters.map((l) => `IN ${l}`)}
                        current="IN D"
                        currentClass="border-[#ee128f] bg-[#ee128f] text-[#5a0436]"
                        lineColor="#e0289a"
                        curve="M24 51.500H500"
                        freq="20Hz"
                        points={[
                            { x: 106, y: 51, label: '4', color: '#b8a068' },
                            { x: 91, y: 51, label: '3', color: '#b8cfe6' },
                            { x: 78, y: 51, label: '2', color: '#3a9a3a' },
                            { x: 65, y: 51, label: 'H', color: '#f0c81e' },
                        ]}
                        bands={[['20', '0.00'], ['20', '0.00']]}
                        paged
                    />
                </div>
            </Workstation>

            <Workstation className="mt-[77px] mr-[2px]">
                <div className="flex gap-[8px] pt-[4px] pl-px">
                    <MatrixWindow />
                    <EqWindow
                        title={<>均衡器<Tag>E</Tag>-OUT 1</>}
                        tone="green"
                        channels={letters.map((_, i) => `OUT ${i + 1}`)}
                        current="OUT 1"
                        currentClass="border-[#5b86f2] bg-[#5b86f2] text-[#12285e]"
                        lineColor="#5b86f2"
                        curve="M24 51H60Q92 50 101 36Q106 28 108 22Q112 12 116 22Q122 40 136 46Q150 50.500 190 51H500"
                        freq="44Hz"
                        points={[
                            { x: 65, y: 51, label: 'H', color: '#f0c81e' },
                            { x: 112, y: 20, label: '1', color: '#f0c81e' },
                            { x: 147, y: 51, label: '2', color: '#3a9a3a' },
                            { x: 185, y: 51, label: '3', color: '#b8cfe6' },
                            { x: 225, y: 51, label: '4', color: '#b8a068' },
                        ]}
                        bands={[['44', '15.00'], ['78', '0.00'], ['151', '0.00'], ['295', '0.00'], ['573', '0.00']]}
                    />
                </div>
            </Workstation>

            <Watermark />
        </main>
    )
}
